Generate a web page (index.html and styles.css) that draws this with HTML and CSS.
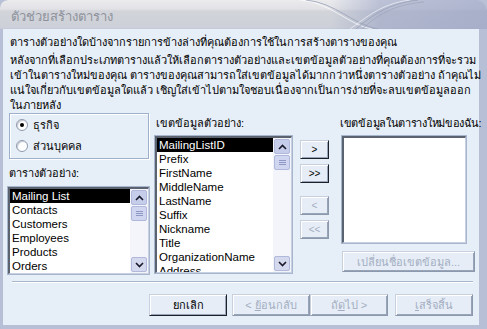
FILE: index.html
```html
<!DOCTYPE html>
<html lang="th">
<head>
<meta charset="utf-8">
<title>ตัวช่วยสร้างตาราง</title>
<link rel="stylesheet" href="styles.css">
</head>
<body>
<div class="window">
  <header class="titlebar">
    <svg class="swoosh" width="487" height="29" viewBox="0 0 487 29" aria-hidden="true">
      <path d="M300 0 C 330 2, 350 26, 372 29" fill="none" stroke="#ffffff" stroke-opacity="0.7" stroke-width="1"/>
      <path d="M306 0 C 336 3, 352 24, 378 29" fill="none" stroke="#9aa2b8" stroke-width="0.8"/>
      <path d="M350 29 C 366 18, 380 4, 410 0" fill="none" stroke="#ffffff" stroke-opacity="0.6" stroke-width="1"/>
      <path d="M356 29 C 372 16, 386 4, 418 0" fill="none" stroke="#9aa2b8" stroke-width="0.8"/>
      <path d="M362 29 C 378 15, 392 5, 424 2" fill="none" stroke="#9aa2b8" stroke-width="0.6"/>
    </svg>
    <h1 class="title">ตัวช่วยสร้างตาราง</h1>
  </header>
  <main class="body">
    <p class="intro">ตารางตัวอย่างใดบ้างจากรายการข้างล่างที่คุณต้องการใช้ในการสร้างตารางของคุณ</p>
    <p class="desc">หลังจากที่เลือกประเภทตารางแล้วให้เลือกตารางตัวอย่างและเขตข้อมูลตัวอย่างที่คุณต้องการที่จะรวม<br>เข้าในตารางใหม่ของคุณ ตารางของคุณสามารถใส่เขตข้อมูลได้มากกว่าหนึ่งตารางตัวอย่าง ถ้าคุณไม่<br>แน่ใจเกี่ยวกับเขตข้อมูลใดแล้ว เชิญใส่เข้าไปตามใจชอบเนื่องจากเป็นการง่ายที่จะลบเขตข้อมูลออก<br>ในภายหลัง</p>

    <div class="main">
      <div class="col col-left">
        <div class="group">
          <label class="radio"><span class="dot checked"></span>ธุรกิจ</label>
          <label class="radio"><span class="dot"></span>ส่วนบุคคล</label>
        </div>
        <div class="label label-left">ตารางตัวอย่าง:</div>
        <div class="list list-tables">
          <ul class="items">
            <li class="sel">Mailing List</li>
            <li>Contacts</li>
            <li>Customers</li>
            <li>Employees</li>
            <li>Products</li>
            <li>Orders</li>
          </ul>
          <div class="scroll">
            <span class="sbtn up"><svg width="9" height="6" viewBox="0 0 9 6"><path d="M1 5 L4.5 1.5 L8 5" fill="none" stroke="#1a1a2a" stroke-width="1.6"/></svg></span>
            <span class="thumb"><i></i><i></i><i></i></span>
            <span class="track"></span>
            <span class="sbtn down"><svg width="9" height="6" viewBox="0 0 9 6"><path d="M1 1 L4.5 4.5 L8 1" fill="none" stroke="#1a1a2a" stroke-width="1.6"/></svg></span>
          </div>
        </div>
      </div>

      <div class="col col-mid">
        <div class="label">เขตข้อมูลตัวอย่าง:</div>
        <div class="list list-fields">
          <ul class="items">
            <li class="sel">MailingListID</li>
            <li>Prefix</li>
            <li>FirstName</li>
            <li>MiddleName</li>
            <li>LastName</li>
            <li>Suffix</li>
            <li>Nickname</li>
            <li>Title</li>
            <li>OrganizationName</li>
            <li>Address</li>
          </ul>
          <div class="scroll">
            <span class="sbtn up"><svg width="9" height="6" viewBox="0 0 9 6"><path d="M1 5 L4.5 1.5 L8 5" fill="none" stroke="#1a1a2a" stroke-width="1.6"/></svg></span>
            <span class="thumb"><i></i><i></i><i></i></span>
            <span class="track"></span>
            <span class="sbtn down"><svg width="9" height="6" viewBox="0 0 9 6"><path d="M1 1 L4.5 4.5 L8 1" fill="none" stroke="#1a1a2a" stroke-width="1.6"/></svg></span>
          </div>
        </div>
      </div>

      <div class="col col-btns">
        <button class="btn small">&gt;</button>
        <button class="btn small">&gt;&gt;</button>
        <button class="btn small disabled spaced">&lt;</button>
        <button class="btn small disabled">&lt;&lt;</button>
      </div>

      <div class="col col-right">
        <div class="label label-new">เขตข้อมูลในตารางใหม่ของฉัน:</div>
        <div class="list list-new"></div>
        <button class="btn wide disabled">เปลี่ยนชื่อเขตข้อมูล...</button>
      </div>
    </div>

    <div class="sep"></div>

    <footer class="footer">
      <button class="btn foot">ยกเลิก</button>
      <button class="btn foot disabled">&lt;&nbsp;<u>ย้</u>อนกลับ</button>
      <button class="btn foot disabled">ถั<u>ด</u>ไป&nbsp;&gt;</button>
      <button class="btn foot disabled gap"><u>เ</u>สร็จสิ้น</button>
    </footer>
  </main>
</div>
</body>
</html>
```

FILE: styles.css
```css
* { box-sizing: border-box; }
html, body { margin: 0; padding: 0; }
body {
  width: 487px;
  height: 329px;
  overflow: hidden;
  font-family: Tahoma, "Liberation Sans", "Noto Sans", sans-serif;
  font-size: 11px;
  color: #000;
  background: #b9c1d6;
}
.window {
  width: 487px;
  height: 329px;
  display: flex;
  flex-direction: column;
  background: #b7bfd6;
  border-radius: 8px 10px 0 0;
  overflow: hidden;
}
.titlebar {
  position: relative;
  height: 29px;
  flex: none;
  background:
    linear-gradient(to right, rgba(0,0,0,0) 0, rgba(0,0,0,0) 330px, rgba(150,160,195,0.55) 380px, rgba(150,160,195,0.7) 487px),
    linear-gradient(to bottom, #ebebee 0, #e2e2e6 9px, #d2d4da 11px, #cdd0d8 28px, #c0c6d6 29px);
  border-radius: 8px 12px 0 0;
}
.swoosh { position: absolute; left: 0; top: 0; }
.title {
  position: relative;
  margin: 0;
  padding: 9px 0 0 11px;
  font-size: 13px;
  font-weight: normal;
  line-height: 16px;
  color: #8e929c;
  white-space: nowrap;
}
.body {
  flex: 1;
  margin: 0 8px 4px 3px;
  background: #e6eef7;
  padding: 6px 6px 0 5px;
  display: flex;
  flex-direction: column;
  min-height: 0;
}
.intro, .desc {
  margin: 0 0 0 2px;
  line-height: 15px;
  font-size: 11px;
  white-space: nowrap;
}
.intro { margin-bottom: 3px; }
.main {
  margin-top: 0;
  display: grid;
  grid-template-columns: 141px 137px 29px 133px;
  column-gap: 6px;
  height: 161px;
  flex: none;
}
.col { display: flex; flex-direction: column; min-width: 0; }
.col-btns { margin-left: 2px; padding-top: 27px; gap: 5px; }
.col-right { margin-left: 9px; }

.group {
  margin-left: 1px;
  height: 46px;
  flex: none;
  border: 1px solid #9fb0cb;
  box-shadow: inset 1px 1px 0 #fff, 1px 1px 0 #fff;
  padding: 2px 0 0 6px;
  display: flex;
  flex-direction: column;
  gap: 3px;
}
.radio {
  display: flex;
  align-items: center;
  gap: 5px;
  height: 18px;
  font-size: 11px;
  line-height: 18px;
  white-space: nowrap;
}
.dot {
  width: 12px;
  height: 12px;
  border-radius: 50%;
  background: #fff;
  border: 1px solid #8e9aae;
  box-shadow: inset 1px 1px 1px #c4c8d0;
  position: relative;
  flex: none;
}
.dot.checked::after {
  content: "";
  position: absolute;
  left: 3px; top: 3px;
  width: 4px; height: 4px;
  border-radius: 50%;
  background: #000;
}
.label {
  height: 23px;
  flex: none;
  padding-top: 3px;
  font-size: 11px;
  line-height: 15px;
  padding-left: 1px;
  white-space: nowrap;
}
.label-left { margin-top: 4px; height: 24px; }
.label-new { margin-left: -3px; letter-spacing: -0.3px; }

.list {
  background: #fff;
  border-style: solid;
  border-width: 2px 1px 1px 2px;
  border-color: #5c6370 #c6d0e0 #c6d0e0 #5c6370;
  outline: 1px solid #a7b5cd;
  display: flex;
  overflow: hidden;
  flex: none;
}
.list-tables { height: 87px; }
.list-fields { height: 137px; }
.list-new { height: 107px; }
.items {
  list-style: none;
  margin: 0;
  padding: 0;
  flex: 1;
  overflow: hidden;
  font-family: "Liberation Sans", Tahoma, sans-serif;
  font-size: 11.5px;
}
.items li {
  height: 14px;
  line-height: 14px;
  padding-left: 2px;
  white-space: nowrap;
}
.items li.sel { background: #000; color: #fff; }

.scroll {
  width: 18px;
  flex: none;
  display: flex;
  flex-direction: column;
  background: #f3f5fa;
  padding: 1px;
}
.sbtn, .thumb {
  height: 15px;
  flex: none;
  background: #c6cdea;
  border: 1px solid #b0b8dc;
  border-radius: 2px;
  display: flex;
  align-items: center;
  justify-content: center;
}
.sbtn.down { background: #d4d9ee; }
.thumb { margin-top: 1px; flex-direction: column; gap: 1px; background: #d0d6f0; }
.thumb i { display: block; width: 7px; height: 1px; background: #8e98c4; }
.track { flex: 1; }

.btn {
  font-family: Tahoma, "Liberation Sans", "Noto Sans", sans-serif;
  font-size: 11px;
  line-height: 14px;
  color: #000;
  background: #e6edf6;
  border-style: solid;
  border-width: 1px;
  border-color: #c8d0de #1c2028 #1c2028 #c8d0de;
  box-shadow: inset 1px 1px 0 #ffffff, inset -1px -1px 0 #98a4b8;
  padding: 0;
  margin: 0;
  display: flex;
  align-items: center;
  justify-content: center;
  white-space: nowrap;
  flex: none;
}
.btn.disabled { color: #a4aec2; border-color: #c8d0de #8c98ac #8c98ac #c8d0de; }
.btn.small { width: 29px; height: 19px; font-family: "Liberation Sans", sans-serif; font-size: 10px; }
.btn.spaced { margin-top: 8px; }
.btn.wide { margin-top: 8px; width: 133px; height: 21px; }

.sep {
  margin: 7px 0 0 4px;
  width: 461px;
  height: 2px;
  flex: none;
  border-top: 1px solid #a9b6cc;
  border-bottom: 1px solid #ffffff;
}
.footer {
  margin-top: 11px;
  display: flex;
  justify-content: flex-end;
  width: 465px;
  flex: none;
}
.btn.foot { width: 78px; height: 22px; }
.btn.foot.gap { margin-left: 7px; }
.footer .btn:nth-child(2) { margin-left: 5px; }
```
